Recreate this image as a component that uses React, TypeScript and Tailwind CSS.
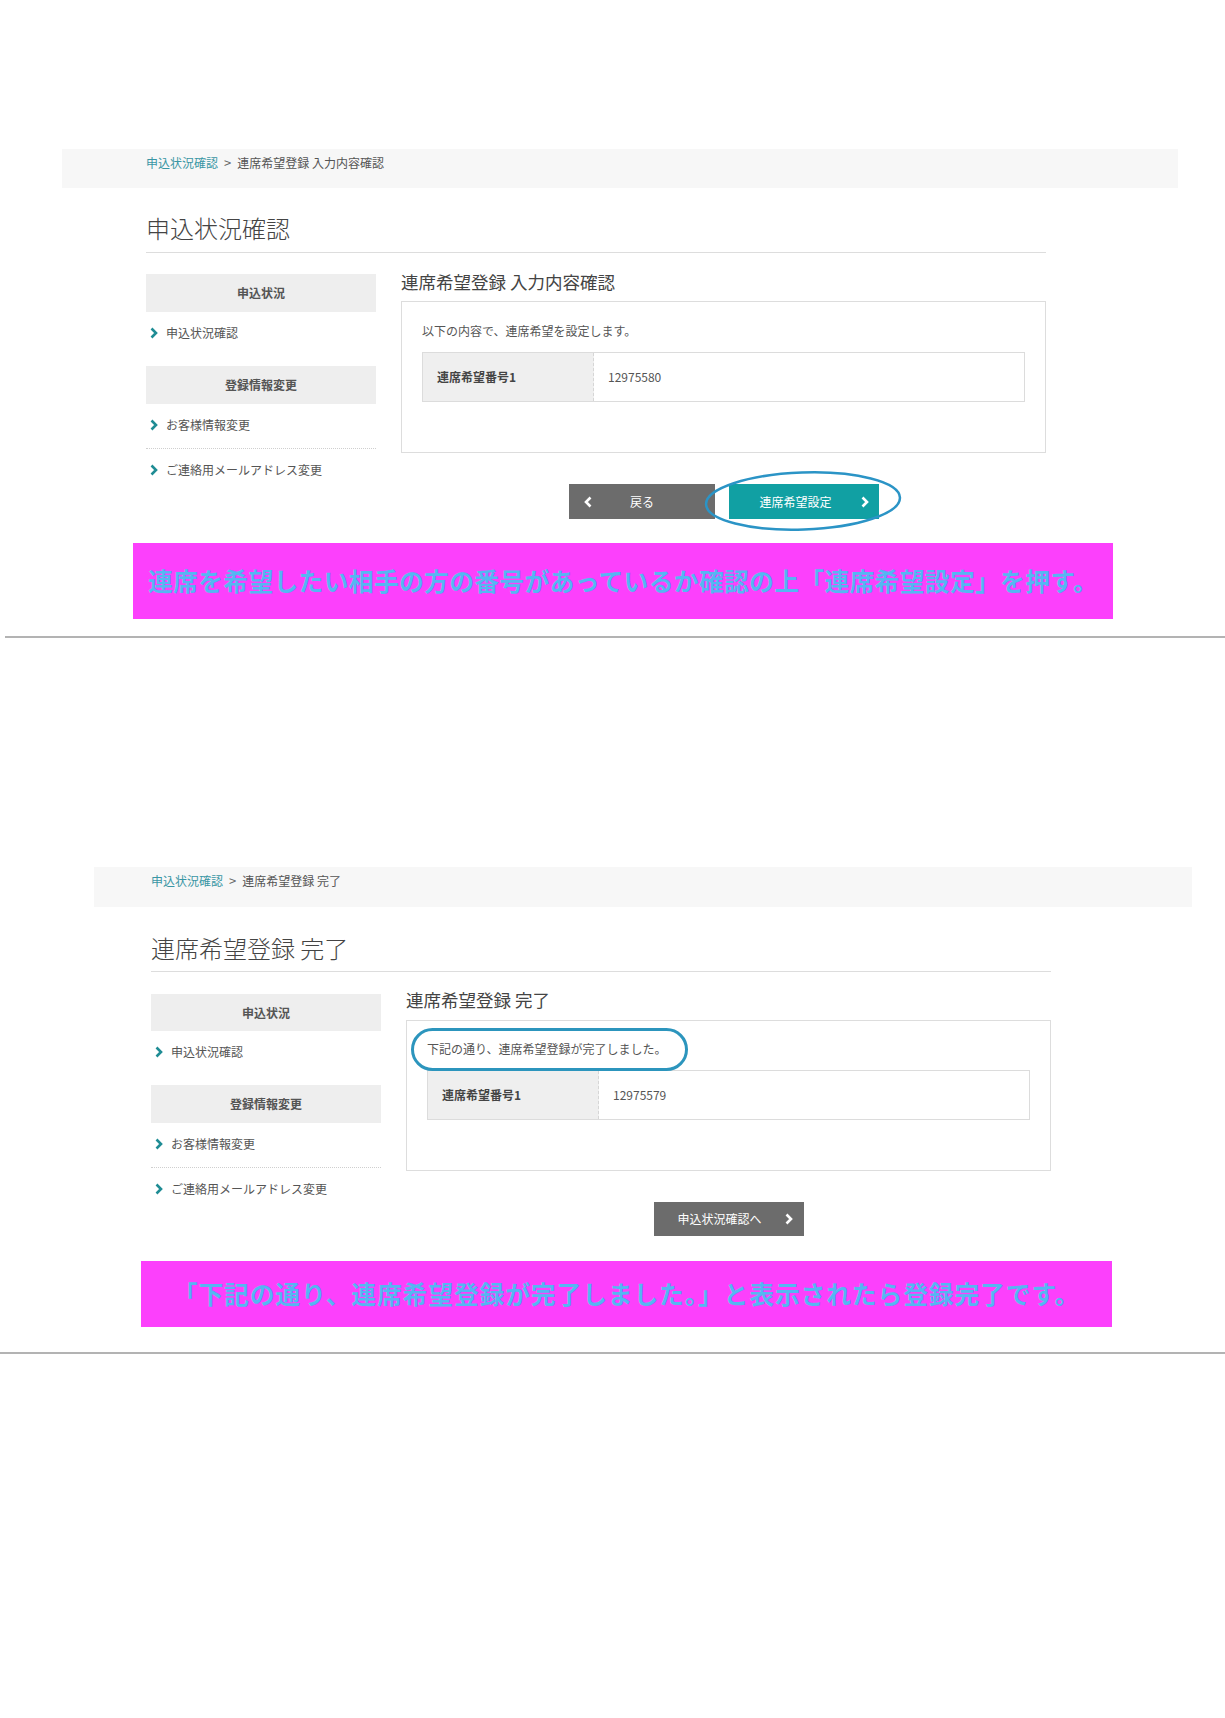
const jp = "font-['Noto_Sans_CJK_JP','Noto_Sans',sans-serif]";

function Chevron({ dir = "right", color = "#ffffff" }: { dir?: "left" | "right"; color?: string }) {
  return (
    <svg width="8" height="12" viewBox="0 0 8 12" className="shrink-0">
      <polyline
        points={dir === "right" ? "1.5,1.5 6,6 1.5,10.5" : "6.5,1.5 2,6 6.5,10.5"}
        fill="none"
        stroke={color}
        strokeWidth="2.6"
      />
    </svg>
  );
}

function NavLink({ label, divider }: { label: string; divider?: boolean }) {
  return (
    <div
      className={
        "flex items-center gap-[8px] pl-[4px] text-[12px] text-[#555] " +
        (divider ? "h-[45px] border-b border-dotted border-[#cfcfcf] pb-[3px]" : "h-[42px]")
      }
    >
      <Chevron color="#1f8c94" />
      <span>{label}</span>
    </div>
  );
}

function Sidebar({ top, firstHeader }: { top: string; firstHeader: string }) {
  return (
    <div className={"w-[230px] shrink-0 " + top}>
      <div className={"flex items-center justify-center bg-[#eeeeee] text-[12px] font-bold text-[#555] " + firstHeader}>
        申込状況
      </div>
      <NavLink label="申込状況確認" />
      <div className="mt-[12px] flex h-[38px] items-center justify-center bg-[#eeeeee] text-[12px] font-bold text-[#555]">
        登録情報変更
      </div>
      <NavLink label="お客様情報変更" divider />
      <NavLink label="ご連絡用メールアドレス変更" />
    </div>
  );
}

function NumberTable({ value }: { value: string }) {
  return (
    <div className="mt-[12px] flex h-[50px] border border-[#dcdcdc] text-[12px]">
      <div className="flex w-[171px] items-center border-r border-dashed border-[#d6d6d6] bg-[#efefef] pl-[14px] font-bold text-[#444]">
        連席希望番号1
      </div>
      <div className="flex flex-1 items-center pl-[14px] text-[#555]">{value}</div>
    </div>
  );
}

function Breadcrumb({ band, current }: { band: string; current: string }) {
  return (
    <div className={"flex items-start bg-[#f7f7f7] pt-[5px] text-[12px] leading-[18px] " + band}>
      <span className="text-[#3a96a4]">申込状況確認</span>
      <span className="mx-[6px] text-[13px] text-[#666]">&gt;</span>
      <span className="text-[#555]">{current}</span>
    </div>
  );
}

function Note({ box, children }: { box: string; children: string }) {
  return (
    <div className={"flex items-center justify-center bg-[#fc40fc] text-[24.8px] font-bold text-[#55b6f2] " + box}>
      {children}
    </div>
  );
}

export default function App() {
  return (
    <div className={"min-h-[1718px] w-[1225px] bg-white pt-[149px] " + jp}>
      {/* 入力内容確認 */}
      <Breadcrumb band="ml-[62px] h-[39px] w-[1116px] pl-[84px]" current="連席希望登録 入力内容確認" />

      <div className="ml-[146px] w-[900px]">
        <h1 className="mt-[24px] border-b border-[#dddddd] pb-[8px] text-[24px] leading-[32px] font-light text-[#444]">
          申込状況確認
        </h1>

        <div className="mt-[17px] flex gap-[25px]">
          <Sidebar top="mt-[4px]" firstHeader="h-[38px]" />

          <div className="w-[645px]">
            <h2 className="text-[17.5px] leading-[24px] text-[#444]">連席希望登録 入力内容確認</h2>
            <div className="mt-[7px] border border-[#dddddd] px-[20px] pt-[20px] pb-[50px]">
              <p className="text-[12px] leading-[18px] text-[#555]">以下の内容で、連席希望を設定します。</p>
              <NumberTable value="12975580" />
            </div>

            <div className="mt-[31px] flex justify-center">
              <div className="relative flex gap-[14px]">
                <div className="flex h-[35px] w-[146px] items-center bg-[#6c6c6c] pl-[15px] text-[12px] text-white">
                  <Chevron dir="left" />
                  <span className="flex-1 pr-[22px] text-center">戻る</span>
                </div>
                <div className="flex h-[35px] w-[150px] items-center justify-between bg-[#11a0a3] pl-[31px] pr-[10px] text-[12px] text-white">
                  <span>連席希望設定</span>
                  <Chevron />
                </div>
                <svg
                  className="pointer-events-none absolute top-[-15px] left-[134px]"
                  width="200"
                  height="64"
                  viewBox="0 0 200 64"
                >
                  <ellipse
                    cx="100"
                    cy="32"
                    rx="97"
                    ry="28.5"
                    transform="rotate(-2 100 32)"
                    fill="none"
                    stroke="#2b94c6"
                    strokeWidth="2.5"
                  />
                </svg>
              </div>
            </div>
          </div>
        </div>
      </div>

      <Note box="mt-[24px] ml-[133px] h-[76px] w-[980px] tracking-[0.3px]">
        連席を希望したい相手の方の番号があっているか確認の上「連席希望設定」を押す。
      </Note>

      <div className="mt-[17px] ml-[5px] h-[2px] bg-[#b3b3b3]" />

      {/* 完了 */}
      <div className="mt-[229px]">
        <Breadcrumb band="ml-[94px] h-[40px] w-[1098px] pl-[57px]" current="連席希望登録 完了" />
      </div>

      <div className="ml-[151px] w-[900px]">
        <h1 className="mt-[25px] border-b border-[#dddddd] pb-[7px] text-[24px] leading-[32px] font-light text-[#444]">
          連席希望登録 完了
        </h1>

        <div className="mt-[16px] flex gap-[25px]">
          <Sidebar top="mt-[6px]" firstHeader="h-[37px]" />

          <div className="w-[645px]">
            <h2 className="text-[17.5px] leading-[24px] text-[#444]">連席希望登録 完了</h2>
            <div className="relative mt-[8px] border border-[#dddddd] px-[20px] pt-[19px] pb-[50px]">
              <p className="text-[12px] leading-[18px] text-[#555]">下記の通り、連席希望登録が完了しました。</p>
              <NumberTable value="12975579" />
              <svg
                className="pointer-events-none absolute top-[7px] left-[4px]"
                width="277"
                height="43"
                viewBox="0 0 277 43"
              >
                <rect x="1.5" y="1.5" width="274" height="40" rx="20" fill="none" stroke="#2c95bd" strokeWidth="3" />
              </svg>
            </div>

            <div className="mt-[31px] flex justify-center">
              <div className="flex h-[34px] w-[150px] items-center justify-between bg-[#6c6c6c] pl-[24px] pr-[11px] text-[12px] text-white">
                <span>申込状況確認へ</span>
                <Chevron />
              </div>
            </div>
          </div>
        </div>
      </div>

      <Note box="mt-[25px] ml-[141px] h-[66px] w-[971px] tracking-[0.85px]">
        「下記の通り、連席希望登録が完了しました。」と表示されたら登録完了です。
      </Note>

      <div className="mt-[25px] h-[2px] bg-[#b3b3b3]" />
    </div>
  );
}
